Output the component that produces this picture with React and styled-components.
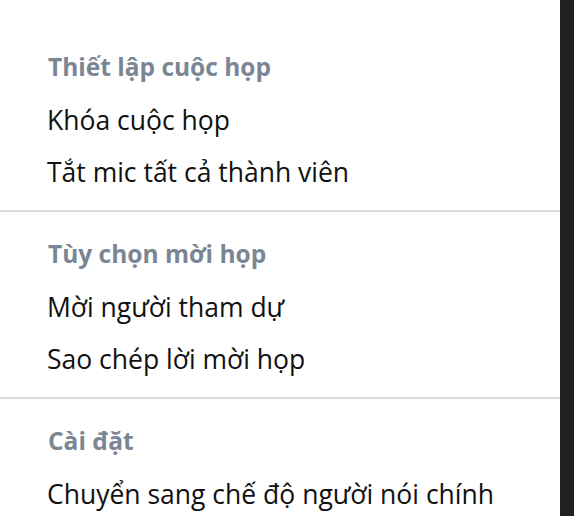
import styled, { createGlobalStyle } from "styled-components";

const GlobalStyle = createGlobalStyle`
  html, body {
    margin: 0;
    padding: 0;
    background: #202020;
  }
  body {
    font-family: "Open Sans", "Noto Sans", "DejaVu Sans", sans-serif;
  }
`;

const Screen = styled.div`
  display: flex;
  width: 574px;
  height: 516px;
  overflow: hidden;
`;

const Panel = styled.div`
  width: 560px;
  flex-shrink: 0;
  background: #ffffff;
  padding-top: 25px;
`;

const Edge = styled.div`
  flex: 1;
  background: #202020;
`;

const Section = styled.section`
  padding: 17px 0 12px;
  border-bottom: ${(p) => (p.last ? "none" : "2px solid #dcdcdc")};
`;

const Header = styled.div`
  height: 52px;
  box-sizing: border-box;
  padding: 0 0 4px 48px;
  display: flex;
  align-items: center;
  font-size: 24.5px;
  font-weight: 700;
  color: #7a8694;
`;

const Item = styled.div`
  height: 52px;
  display: flex;
  align-items: center;
  padding-left: 47px;
  font-size: 26.5px;
  color: #111111;
  white-space: nowrap;
`;

const sections = [
  {
    title: "Thiết lập cuộc họp",
    items: ["Khóa cuộc họp", "Tắt mic tất cả thành viên"],
  },
  {
    title: "Tùy chọn mời họp",
    items: ["Mời người tham dự", "Sao chép lời mời họp"],
  },
  {
    title: "Cài đặt",
    items: ["Chuyển sang chế độ người nói chính"],
  },
];

export default function App() {
  return (
    <>
      <GlobalStyle />
      <Screen>
        <Panel>
          {sections.map((s, i) => (
            <Section key={s.title} last={i === sections.length - 1}>
              <Header>{s.title}</Header>
              {s.items.map((it) => (
                <Item key={it}>{it}</Item>
              ))}
            </Section>
          ))}
        </Panel>
        <Edge />
      </Screen>
    </>
  );
}
